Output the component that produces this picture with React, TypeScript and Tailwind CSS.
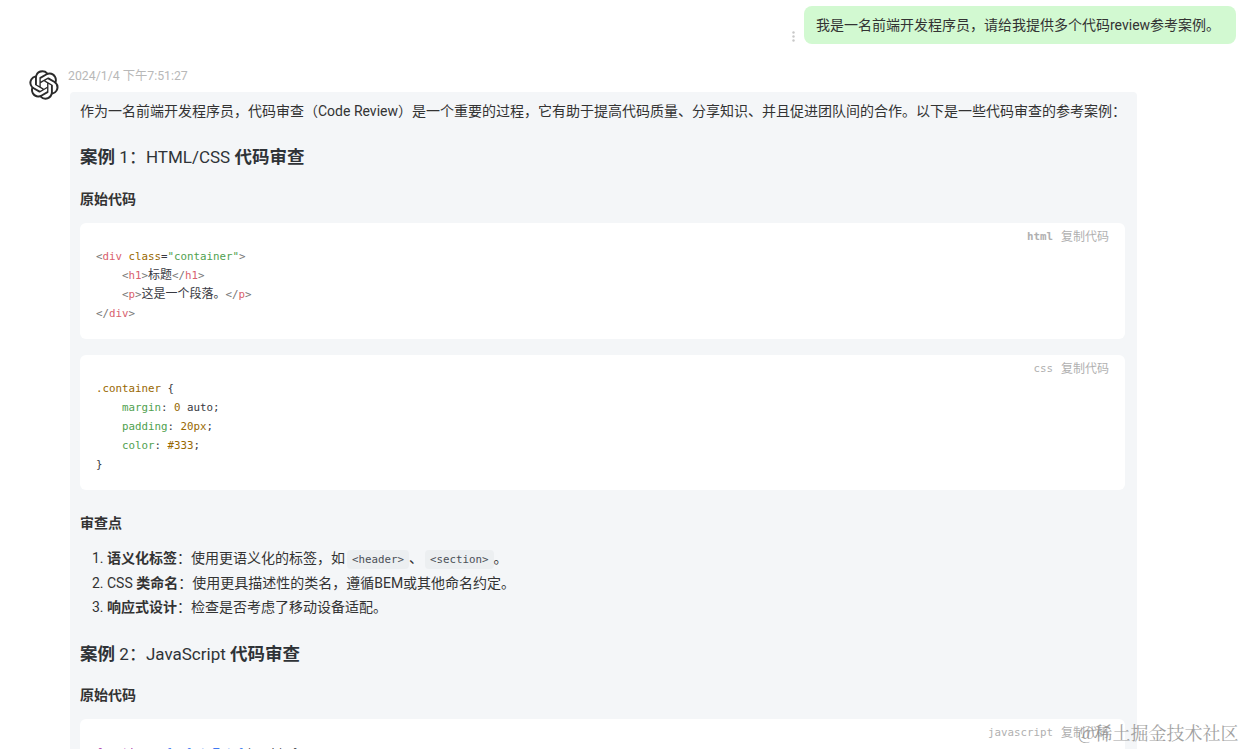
const sans = "font-['Roboto','Noto_Sans_CJK_SC',sans-serif]";

function Tag({ children }: { children: React.ReactNode }) {
  return <span className="text-[#d9626e]">{children}</span>;
}

function Gpt() {
  return (
    <svg viewBox="0 0 41 41" className="w-[30px] h-[30px]" fill="#2b2b2b">
      <path d="M37.532 16.87a9.963 9.963 0 0 0-.856-8.184 10.078 10.078 0 0 0-10.855-4.835A9.964 9.964 0 0 0 18.306.5a10.079 10.079 0 0 0-9.614 6.977 9.967 9.967 0 0 0-6.664 4.834 10.08 10.08 0 0 0 1.24 11.817 9.965 9.965 0 0 0 .856 8.185 10.079 10.079 0 0 0 10.855 4.835 9.965 9.965 0 0 0 7.516 3.35 10.078 10.078 0 0 0 9.617-6.981 9.967 9.967 0 0 0 6.663-4.834 10.079 10.079 0 0 0-1.243-11.813ZM22.498 37.886a7.474 7.474 0 0 1-4.799-1.735c.061-.033.168-.091.237-.134l7.964-4.6a1.294 1.294 0 0 0 .655-1.134V19.054l3.366 1.944a.12.12 0 0 1 .066.092v9.299a7.505 7.505 0 0 1-7.49 7.496ZM6.392 31.006a7.471 7.471 0 0 1-.894-5.023c.06.036.162.099.237.141l7.964 4.6a1.297 1.297 0 0 0 1.308 0l9.724-5.614v3.888a.12.12 0 0 1-.048.103l-8.051 4.649a7.504 7.504 0 0 1-10.24-2.744ZM4.297 13.62A7.469 7.469 0 0 1 8.2 10.333c0 .068-.004.19-.004.274v9.201a1.294 1.294 0 0 0 .654 1.132l9.723 5.614-3.366 1.944a.12.12 0 0 1-.114.01L7.04 23.856a7.504 7.504 0 0 1-2.743-10.237Zm27.658 6.437-9.724-5.615 3.367-1.943a.121.121 0 0 1 .113-.01l8.052 4.648a7.498 7.498 0 0 1-1.158 13.528v-9.476a1.293 1.293 0 0 0-.65-1.132Zm3.35-5.043c-.059-.037-.162-.099-.236-.141l-7.965-4.6a1.298 1.298 0 0 0-1.308 0l-9.723 5.614v-3.888a.12.12 0 0 1 .048-.103l8.05-4.645a7.497 7.497 0 0 1 11.135 7.763Zm-21.063 6.929-3.367-1.944a.12.12 0 0 1-.065-.092v-9.299a7.497 7.497 0 0 1 12.293-5.756 6.94 6.94 0 0 0-.236.134l-7.965 4.6a1.294 1.294 0 0 0-.654 1.132l-.006 11.225Zm1.829-3.943 4.33-2.501 4.332 2.5v5l-4.331 2.5-4.331-2.5V18Z" />
    </svg>
  );
}

function CodeBlock({
  lang,
  bold,
  className,
  children,
}: {
  lang: string;
  bold?: boolean;
  className: string;
  children: React.ReactNode;
}) {
  return (
    <div className={`bg-white rounded-md px-4 ${className}`}>
      <div className="flex justify-end items-center h-[28px] gap-2 text-[#b0b0b0]">
        <span className={`font-['DejaVu_Sans_Mono',monospace] text-[10.8px] ${bold ? "font-bold" : ""}`}>{lang}</span>
        <span className="text-xs">复制代码</span>
      </div>
      <pre className="font-['DejaVu_Sans_Mono','Noto_Sans_CJK_SC',monospace] text-[10.8px] leading-[19px] text-[#383a42] mt-[-4px]">
        {children}
      </pre>
    </div>
  );
}

function Heading({ a, b, c, className }: { a: string; b: string; c: string; className: string }) {
  return (
    <h3 className={`text-[17.5px] leading-7 text-[#2f3337] ${className}`}>
      <span className="font-bold">{a}</span>
      <span className="text-[17px]">{b}</span>
      <span className="font-bold">{c}</span>
    </h3>
  );
}

function InlineCode({ children }: { children: React.ReactNode }) {
  return (
    <code className="font-['DejaVu_Sans_Mono',monospace] text-[10.8px] leading-none bg-[#eceff1] rounded px-[5px] py-[3px] ml-[2px] text-[#4b4f57]">
      {children}
    </code>
  );
}

export default function App() {
  return (
    <div className={`relative h-screen overflow-hidden bg-white text-sm text-[#333] ${sans}`}>
      <div className="flex justify-end items-end pt-[6px] pr-[7px] gap-[9px]">
        <svg viewBox="0 0 3 11" className="w-[3px] h-[11px] mb-[2px]" fill="#c8c8c8">
          <circle cx="1.5" cy="1.5" r="1.2" />
          <circle cx="1.5" cy="5.5" r="1.2" />
          <circle cx="1.5" cy="9.5" r="1.2" />
        </svg>
        <div className="bg-[#d2f9d1] rounded-lg w-[432px] h-[38px] px-3 flex items-center whitespace-nowrap">
          我是一名前端开发程序员，请给我提供多个代码review参考案例。
        </div>
      </div>

      <div className="flex mt-[26px] pl-[29px]">
        <div className="w-[30px] shrink-0">
          <Gpt />
        </div>
        <div className="ml-[9px] min-w-0">
          <div className="text-[12.3px] leading-[16px] text-[#b8b8b8] -mt-[2px] mb-[8px]">2024/1/4 下午7:51:27</div>
          <div className="w-[1067px] ml-[2px] bg-[#f4f6f8] rounded pl-[10px] pr-3 pt-[8px] pb-10">
            <p className="leading-[22px] whitespace-nowrap">
              作为一名前端开发程序员，代码审查（Code Review）是一个重要的过程，它有助于提高代码质量、分享知识、并且促进团队间的合作。以下是一些代码审查的参考案例：
            </p>
            <Heading a="案例 " b="1：HTML/CSS " c="代码审查" className="mt-[21px]" />
            <p className="font-bold mt-[17px] leading-[22px]">原始代码</p>
            <CodeBlock lang="html" bold className="mt-[13px] h-[116px]">
              <span className="text-[#777]">&lt;</span><Tag>div</Tag> <span className="text-[#986801]">class</span>=<span className="text-[#50a14f]">"container"</span><span className="text-[#777]">&gt;</span>{"\n"}
              {"    "}<span className="text-[#777]">&lt;</span><Tag>h1</Tag><span className="text-[#777]">&gt;</span><span className="text-xs">标题</span><span className="text-[#777]">&lt;/</span><Tag>h1</Tag><span className="text-[#777]">&gt;</span>{"\n"}
              {"    "}<span className="text-[#777]">&lt;</span><Tag>p</Tag><span className="text-[#777]">&gt;</span><span className="text-xs">这是一个段落。</span><span className="text-[#777]">&lt;/</span><Tag>p</Tag><span className="text-[#777]">&gt;</span>{"\n"}
              <span className="text-[#777]">&lt;/</span><Tag>div</Tag><span className="text-[#777]">&gt;</span>
            </CodeBlock>
            <CodeBlock lang="css" className="mt-4 h-[135px]">
              <span className="text-[#986801]">.container</span> {"{"}{"\n"}
              {"    "}<span className="text-[#50a14f]">margin</span>: <span className="text-[#986801]">0</span> auto;{"\n"}
              {"    "}<span className="text-[#50a14f]">padding</span>: <span className="text-[#986801]">20px</span>;{"\n"}
              {"    "}<span className="text-[#50a14f]">color</span>: <span className="text-[#986801]">#333</span>;{"\n"}
              {"}"}
            </CodeBlock>
            <p className="font-bold mt-[22px] leading-[22px]">审查点</p>
            <ol className="list-decimal pl-[27px] mt-[12px] leading-[24.5px]">
              <li><b>语义化标签</b>：使用更语义化的标签，如<InlineCode>&lt;header&gt;</InlineCode>、<InlineCode>&lt;section&gt;</InlineCode>。</li>
              <li>CSS <b>类命名</b>：使用更具描述性的类名，遵循BEM或其他命名约定。</li>
              <li><b>响应式设计</b>：检查是否考虑了移动设备适配。</li>
            </ol>
            <Heading a="案例 " b="2：JavaScript " c="代码审查" className="mt-[20px]" />
            <p className="font-bold mt-[16px] leading-[22px]">原始代码</p>
            <CodeBlock lang="javascript" className="mt-[13px] h-[116px]">
              <span className="text-[#a626a4]">function</span> <span className="text-[#4078f2]">calculateTotal</span>(a, b) {"{"}
            </CodeBlock>
          </div>
        </div>
      </div>

      <div className="absolute left-[1078px] top-[720px] text-lg leading-[24px] text-[#8a8a8a] opacity-80 font-['Noto_Serif_CJK_SC','Liberation_Serif','Noto_Sans_CJK_SC',serif] whitespace-nowrap">
        @稀土掘金技术社区
      </div>
    </div>
  );
}
